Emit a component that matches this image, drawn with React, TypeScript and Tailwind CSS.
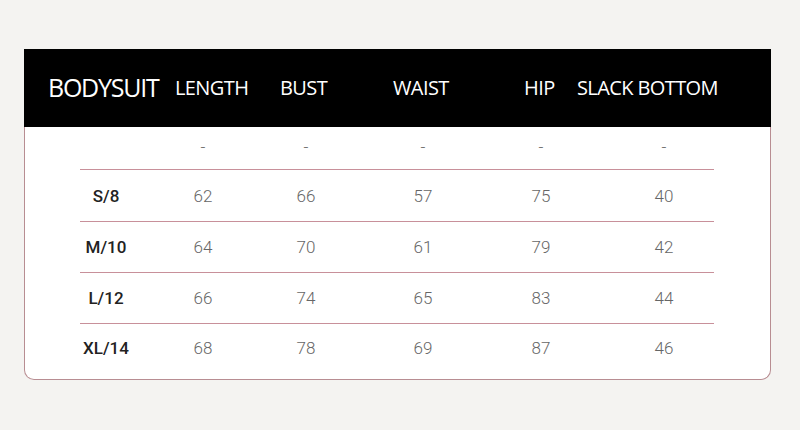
import React from 'react';

// Size chart for bodysuit measurements

const rows = [
  { size: '', values: ['-', '-', '-', '-', '-'], h: 'h-[42px]' },
  { size: 'S/8', values: ['62', '66', '57', '75', '40'], h: 'h-[51px] pt-[3px]' },
  { size: 'M/10', values: ['64', '70', '61', '79', '42'], h: 'h-[50px] pt-[2px]' },
  { size: 'L/12', values: ['66', '74', '65', '83', '44'], h: 'h-[50px] pt-[1px]' },
  { size: 'XL/14', values: ['68', '78', '69', '87', '46'], h: 'h-[50px]' },
];

const headers = [
  { label: 'LENGTH', w: 'w-[105px]' },
  { label: 'BUST', w: 'w-[113px]' },
  { label: 'WAIST', w: 'w-[131px]' },
  { label: 'HIP', w: 'w-[53px]' },
  { label: 'SLACK BOTTOM', w: 'flex-1' },
];

export default function App() {
  return (
    <div className="w-[800px] h-[430px] bg-[#f4f3f1] pt-[49px] pl-[24px]">
      <div className="w-[747px] h-[331px] bg-white border-x border-b border-[#b88d92] rounded-b-[10px] flex flex-col">
        {/* Header */}
        <div className="h-[78px] bg-black -mx-px flex items-center pl-[24px] text-white font-['Open_Sans',sans-serif]">
          <div className="w-[127px] text-[25px] tracking-[-0.05em]">BODYSUIT</div>
          {headers.map((h) => (
            <div key={h.label} className={`${h.w} text-[20px] tracking-[-0.03em]`}>
              {h.label}
            </div>
          ))}
        </div>

        {/* Body */}
        <div className="ml-[55px] w-[634px] flex flex-col">
          {rows.map((r, i) => (
            <React.Fragment key={i}>
              <div
                className={`grid grid-cols-[52px_142px_64px_170px_66px_180px] items-center font-['Roboto',sans-serif] text-[17px] ${r.h}`}
              >
                <div className="text-center font-medium text-[#222]">{r.size}</div>
                {r.values.map((v, j) => (
                  <div key={j} className="text-center font-light text-[#666]">
                    {v}
                  </div>
                ))}
              </div>
              {i < rows.length - 1 && <div className="h-px bg-[#c8909a]" />}
            </React.Fragment>
          ))}
        </div>
      </div>
    </div>
  );
}
